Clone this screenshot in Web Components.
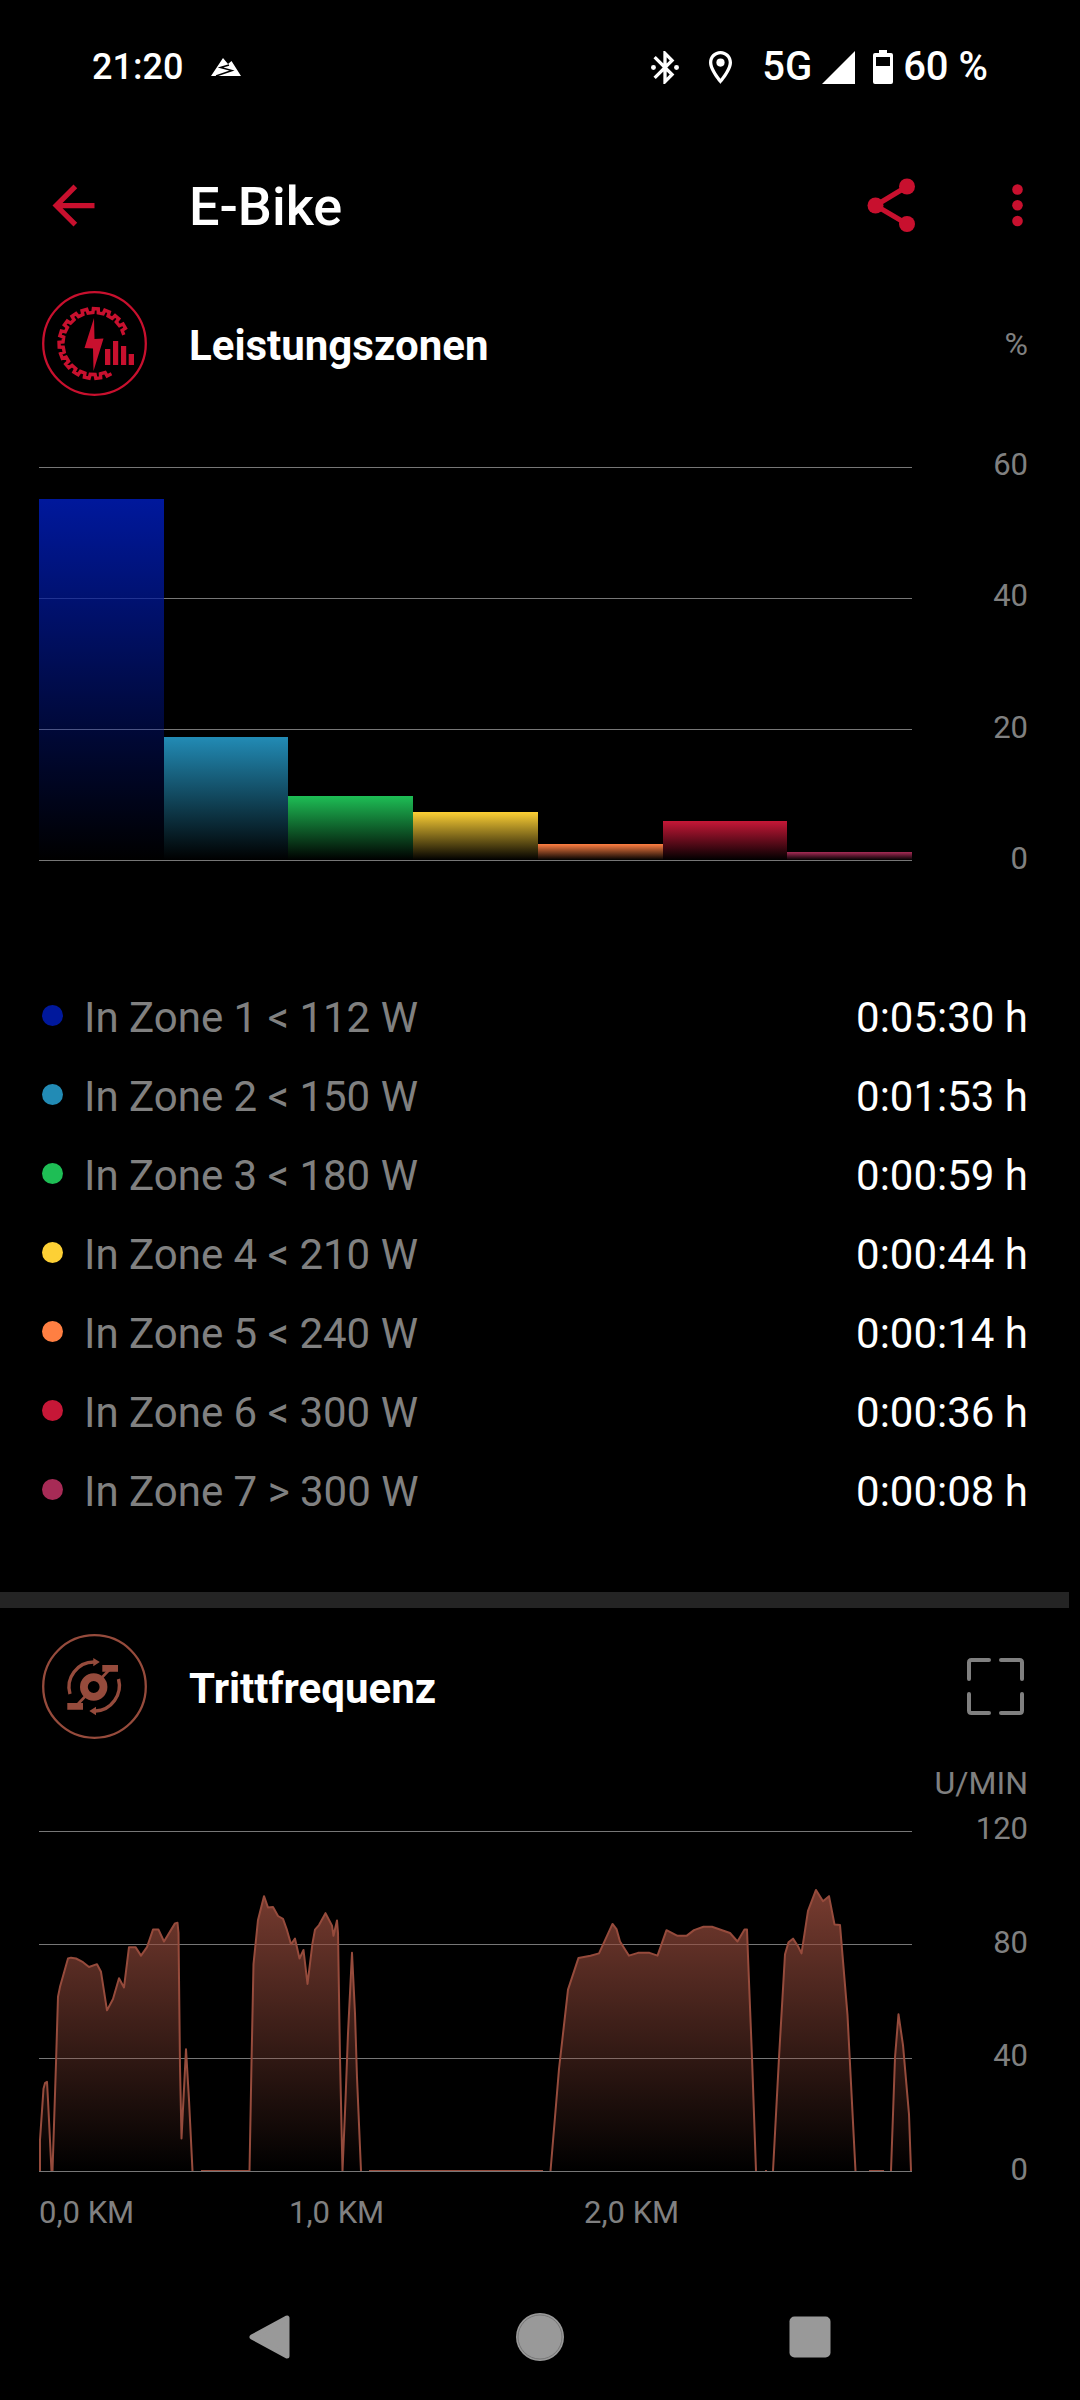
<!DOCTYPE html>
<html lang="de">
<head>
<meta charset="utf-8">
<meta name="viewport" content="width=device-width, initial-scale=1">
<title>E-Bike</title>
<style>
  body {
    margin: 0;
    background: #000;
    color: #fff;
    font-family: Roboto, "Liberation Sans", sans-serif;
  }
</style>
</head>
<body>
<ride-screen>
  <status-bar slot="status" time="21:20" network="5G" battery="60 %"></status-bar>
  <app-bar slot="header" label="E-Bike"></app-bar>

  <ride-section label="Leistungszonen" icon="power" color="#c8102e">
    <span slot="action">%</span>
    <bar-chart max="60" step="20"></bar-chart>
    <zone-table></zone-table>
  </ride-section>

  <section-divider></section-divider>

  <ride-section label="Trittfrequenz" icon="cadence" color="#964b3c">
    <icon-button slot="action" label="Vollbild" icon="fullscreen"></icon-button>
    <area-chart unit="U/MIN" max="120" step="40"></area-chart>
  </ride-section>

  <nav-bar slot="nav"></nav-bar>
</ride-screen>

<script>
const zones = [
  { name: 'In Zone 1 < 112 W', time: '0:05:30 h', percent: 55.1, color: '#00189c' },
  { name: 'In Zone 2 < 150 W', time: '0:01:53 h', percent: 18.8, color: '#228bb5' },
  { name: 'In Zone 3 < 180 W', time: '0:00:59 h', percent: 9.8, color: '#1ebe55' },
  { name: 'In Zone 4 < 210 W', time: '0:00:44 h', percent: 7.4, color: '#fdd035' },
  { name: 'In Zone 5 < 240 W', time: '0:00:14 h', percent: 2.4, color: '#ff7f42' },
  { name: 'In Zone 6 < 300 W', time: '0:00:36 h', percent: 6, color: '#c61737' },
  { name: 'In Zone 7 > 300 W', time: '0:00:08 h', percent: 1.3, color: '#a72b56' }
];

// [distance, rpm] samples, one list per stretch without a gap
const cadence = [
  [[1,0],[1,11],[4.5,29],[6,31],[8,31.5],[9,25],[12.5,0],[13.5,0],[17,38],[19,61.5],[21,65],[29,75],[32,75.3],[37,75],
   [44,73.7],[50,72],[58,73],[62,70.3],[68,56.7],[74,60.7],[80,68],[85,64.8],[90,79],[96.5,79],[102,76],[108,79],
   [114,85.2],[119.5,85.2],[125,81],[136,87.4],[138.5,87.6],[139.5,84],[141,37],[142.5,11.5],[147,43],[150,25],[153.5,0]],
  [[162,0],[210.5,0],[212.5,38],[214.5,73],[219,88.6],[225,97],[229,93],[234,93.2],[239,90],[244,89],[248,85],[252,80],
   [256,82],[260.5,75],[264.5,78],[268.5,66],[273.5,80.4],[276,85.2],[280,86.8],[286.5,91],[293,86.6],[294.5,83],
   [298,88.4],[299,84],[301,40],[303.5,0],[306.5,25],[309,48.6],[313,77],[316,55.6],[318,33],[322,0]],
  [[330,0],[504,0]],
  [[511.5,0],[520,36],[529,64],[539.5,75.2],[551.5,76],[560,76.8],[573.5,87.2],[577.5,85.4],[581,81],[590,76],[599,77],
   [610.5,77],[618.5,76],[627.5,85],[638.5,83],[647.5,83],[655,85],[664.5,86.2],[673,86.2],[691,84],[698.5,81],
   [705.5,85.2],[708,85.2],[709,75.8],[713,40],[717,0]],
  [[726,0],[728,0]],
  [[734,0],[740,40],[746,76.5],[749.5,80.7],[754,82],[759,79.3],[762.5,76.8],[769,91.8],[777,99.2],[784,95.2],[790,97],
   [795.5,87],[801,86.8],[808.5,55],[816.5,0]],
  [[830,0],[845,0]],
  [[852,0],[856,40],[859.5,55.3],[864,44.4],[870,20],[872,0]]
];

// toothed ring, open on the right side
function gearPath() {
  const points = [];
  const at = (r, deg) => {
    const a = deg * Math.PI / 180;
    points.push((52 + r * Math.cos(a)).toFixed(2) + ' ' + (52.5 + r * Math.sin(a)).toFixed(2));
  };
  for (let deg = -16; deg > -300; deg -= 19) {
    at(31, deg);
    at(31, deg - 9);
    at(35, deg - 10);
    at(35, deg - 18);
  }
  return 'M' + points.join('L');
}

const icons = {
  peaks: [30, 18, '0 0 30 18', `
    <path d="M0 18 12 0l5 6 3.500-3L30 18z" fill="currentColor"/>
    <path d="M18 7 9.500 9.500 21 12.500 5 18" fill="none" stroke="#000" stroke-width="1.500"/>`],
  bluetooth: [28, 33, '3.5 2 17 20', `
    <path fill="currentColor" d="M17.710 7.710 12 2h-1v7.590L6.410 5 5 6.410 10.590 12 5 17.590 6.410 19 11 14.410V22h1l5.710-5.710-4.300-4.290zM13 5.830l1.880 1.880L13 9.590zm1.880 10.460L13 18.170v-3.760z"/>
    <circle cx="5" cy="12" r="1.500" fill="currentColor"/><circle cx="19" cy="12" r="1.500" fill="currentColor"/>`],
  place: [23, 33, '5 2 14 20', `
    <path fill="currentColor" d="M12 2C8.130 2 5 5.130 5 9c0 5.250 7 13 7 13s7-7.750 7-13c0-3.870-3.130-7-7-7zM7 9c0-2.760 2.240-5 5-5s5 2.240 5 5c0 2.880-2.880 7.190-5 9.880C9.920 16.210 7 11.850 7 9z"/>
    <circle cx="12" cy="9" r="2.500" fill="currentColor"/>`],
  signal: [33, 33, '0 0 33 33', '<path d="M33 0v33H0z" fill="currentColor"/>'],
  battery: [20, 34, '0 0 20 34', `
    <path fill="currentColor" fill-rule="evenodd" d="M6 0h8v3h4q2 0 2 2v27q0 2-2 2H2q-2 0-2-2V5q0-2 2-2h4zM3 7v9h14V7z"/>`],
  back: [63, 63, '0 0 24 24', '<path fill="currentColor" d="M20 11H7.830l5.590-5.590L12 4l-8 8 8 8 1.410-1.410L7.830 13H20z"/>'],
  share: [63, 63, '0 0 63 63', `
    <path d="M47 12.500 15.500 31.500 47 50" fill="none" stroke="currentColor" stroke-width="5"/>
    <g fill="currentColor"><circle cx="47" cy="12.500" r="8"/><circle cx="15.500" cy="31.500" r="8"/><circle cx="47" cy="50" r="8"/></g>`],
  more: [63, 63, '0 0 63 63', `
    <g fill="currentColor"><circle cx="31.500" cy="15.500" r="5.300"/><circle cx="31.500" cy="31.300" r="5.300"/><circle cx="31.500" cy="47" r="5.300"/></g>`],
  fullscreen: [66, 66, '0 0 66 66', `
    <path d="M27 6H9.500Q7 6 7 8.500V25M39 6h18.500Q60 6 60 8.500V25M27 59H9.500Q7 59 7 56.500V40M39 59h18.500q2.500 0 2.500-2.500V40"
      fill="none" stroke="currentColor" stroke-width="4" stroke-linecap="round"/>`],
  power: [105, 105, '0 0 105 105', `
    <circle cx="52.500" cy="52.500" r="51.300" fill="none" stroke="currentColor" stroke-width="2.300"/>
    <path d="${gearPath()}" fill="none" stroke="currentColor" stroke-width="3.400"/>
    <path fill="currentColor" d="M52 27 42.500 57l8.500 .5L51.500 80l10-32.500-9 .5zM63 58h5.300v16H63zM71 50h5.200v24H71zM79 55h5.200v19H79zM86.700 63H92v11h-5.300z"/>`],
  cadence: [105, 105, '0 0 105 105', `
    <circle cx="52.500" cy="52.500" r="51.300" fill="none" stroke="currentColor" stroke-width="2.300"/>
    <g fill="none" stroke="currentColor">
      <circle cx="51.700" cy="53" r="9.800" stroke-width="7.800"/>
      <path d="M67 36 59 44.500M44 61.500 36 70" stroke-width="2.600"/>
      <path d="M28 60A25 25 0 0 1 52 28M76.500 45A25.500 25.500 0 0 1 53.500 77" stroke-width="3.400"/>
    </g>
    <path fill="currentColor" d="M60.300 31H76v6.700H60.300zM25.300 69H41v6.700H25.300zM51.300 24l6.500 4-6.500 4.200zM54 72.800 47.300 77l6.700 4.200z"/>`],
  navBack: [48, 48, '0 0 48 48', `
    <path d="M41 5v38L6 24z" fill="currentColor" stroke="currentColor" stroke-width="5" stroke-linejoin="round"/>`],
  navHome: [48, 48, '0 0 48 48', `
    <circle cx="24" cy="24" r="24" fill="currentColor"/>
    <circle cx="24" cy="24" r="22" fill="none" stroke="#777"/>`],
  navRecent: [48, 48, '0 0 48 48', '<rect x="3.500" y="3.500" width="41" height="41" rx="5" fill="currentColor"/>']
};

function icon(name) {
  const [width, height, viewBox, body] = icons[name];
  return `<svg width="${width}" height="${height}" viewBox="${viewBox}" aria-hidden="true">${body}</svg>`;
}

// scale values from top to bottom, shared by both charts
function ticks(max, step) {
  const values = [];
  for (let v = max; v >= 0; v -= step) values.push(v);
  return values;
}

const chartStyle = `
  :host {
    display: block;
    padding-left: 39px;
  }
  .chart {
    display: grid;
    grid-template-columns: 1fr 116px;
  }
  .plot {
    display: grid;
    height: var(--plot-height);
    padding: 20px 0 16px;
  }
  .lines, .data {
    grid-area: 1 / 1;
    min-height: 0;
  }
  .lines {
    display: flex;
    flex-direction: column;
    justify-content: space-between;
  }
  .lines i {
    height: 1px;
    background: #777;
  }
  .data {
    padding-bottom: 1px;
  }
  .scale {
    display: flex;
    flex-direction: column;
    justify-content: space-between;
    text-align: right;
  }
  .scale, .distance {
    color: #808080;
    font-size: 31px;
    line-height: 36px;
  }
`;

class RideScreen extends HTMLElement {
  constructor() {
    super();
    this.attachShadow({ mode: 'open' }).innerHTML = `
      <style>
        :host {
          display: flex;
          flex-direction: column;
          min-height: 100vh;
        }
        slot[name="nav"] {
          display: block;
          margin-top: auto;
        }
      </style>
      <slot name="status"></slot>
      <slot name="header"></slot>
      <main><slot></slot></main>
      <slot name="nav"></slot>
    `;
  }
}

class StatusBar extends HTMLElement {
  connectedCallback() {
    this.attachShadow({ mode: 'open' }).innerHTML = `
      <style>
        :host {
          display: flex;
          align-items: center;
          height: 134px;
          padding: 0 92px;
          font-size: 36px;
          font-weight: 500;
          line-height: 42px;
        }
        .peaks {
          display: flex;
          margin-left: 28px;
        }
        .system {
          display: flex;
          align-items: center;
          gap: 30px;
          margin-left: auto;
          font-size: 40px;
        }
        .group {
          display: flex;
          align-items: center;
          gap: 10px;
        }
        .group + .group {
          margin-left: -12px;
        }
      </style>
      <span>${this.getAttribute('time')}</span>
      <span class="peaks">${icon('peaks')}</span>
      <div class="system">
        ${icon('bluetooth')}
        ${icon('place')}
        <span class="group">${this.getAttribute('network')}${icon('signal')}</span>
        <span class="group">${icon('battery')}${this.getAttribute('battery')}</span>
      </div>
    `;
  }
}

class IconButton extends HTMLElement {
  connectedCallback() {
    this.attachShadow({ mode: 'open' }).innerHTML = `
      <style>
        :host {
          display: flex;
        }
        button {
          display: flex;
          flex: 1;
          align-items: center;
          justify-content: center;
          padding: 0;
          border: 0;
          background: none;
          color: inherit;
          cursor: pointer;
        }
      </style>
      <button type="button" aria-label="${this.getAttribute('label')}">${icon(this.getAttribute('icon'))}</button>
    `;
  }
}

class AppBar extends HTMLElement {
  connectedCallback() {
    this.attachShadow({ mode: 'open' }).innerHTML = `
      <style>
        :host {
          display: block;
        }
        header {
          display: flex;
          align-items: center;
          height: 142px;
          padding-left: 42px;
        }
        icon-button {
          color: #c8102e;
        }
        h1 {
          flex: 1;
          margin: 0 0 0 84px;
          padding-top: 4px;
          font-size: 54px;
          font-weight: 500;
          line-height: 62px;
        }
        .action {
          width: 126px;
          height: 126px;
        }
      </style>
      <header>
        <icon-button label="Zurück" icon="back"></icon-button>
        <h1>${this.getAttribute('label')}</h1>
        <icon-button class="action" label="Teilen" icon="share"></icon-button>
        <icon-button class="action" label="Mehr" icon="more"></icon-button>
      </header>
    `;
  }
}

class RideSection extends HTMLElement {
  connectedCallback() {
    this.attachShadow({ mode: 'open' }).innerHTML = `
      <style>
        :host {
          display: block;
          padding: 15px 52px 0 0;
        }
        .head {
          display: flex;
          align-items: center;
          gap: 42px;
          padding-left: 42px;
        }
        .badge {
          display: flex;
          color: ${this.getAttribute('color')};
        }
        h2 {
          flex: 1;
          margin: 0;
          padding-top: 4px;
          font-size: 42px;
          font-weight: 700;
          line-height: 49px;
        }
        .action {
          color: #808080;
          font-size: 32px;
          line-height: 36px;
        }
      </style>
      <section>
        <div class="head">
          <span class="badge">${icon(this.getAttribute('icon'))}</span>
          <h2>${this.getAttribute('label')}</h2>
          <div class="action"><slot name="action"></slot></div>
        </div>
        <slot></slot>
      </section>
    `;
  }
}

class SectionDivider extends HTMLElement {
  constructor() {
    super();
    this.attachShadow({ mode: 'open' }).innerHTML = `
      <style>
        :host {
          display: block;
          height: 16px;
          margin: 61px 11px 11px 0;
          background: #242424;
        }
      </style>
    `;
  }
}

class BarChart extends HTMLElement {
  connectedCallback() {
    const max = Number(this.getAttribute('max'));
    const values = ticks(max, Number(this.getAttribute('step')));

    this.attachShadow({ mode: 'open' }).innerHTML = `
      <style>
        ${chartStyle}
        :host {
          --plot-height: 394px;
          margin-top: 51px;
        }
        .data {
          display: flex;
          align-items: flex-end;
        }
        .data i {
          flex: 1;
          background: linear-gradient(var(--color), transparent);
        }
      </style>
      <div class="chart">
        <div class="plot">
          <div class="lines">${values.map(() => '<i></i>').join('')}</div>
          <div class="data">
            ${zones.map(z => `<i style="height:${z.percent / max * 100}%;--color:${z.color}"></i>`).join('')}
          </div>
        </div>
        <div class="scale">${values.map(v => `<span>${v}</span>`).join('')}</div>
      </div>
    `;
  }
}

class AreaChart extends HTMLElement {
  connectedCallback() {
    const max = Number(this.getAttribute('max'));
    const values = ticks(max, Number(this.getAttribute('step')));
    const lines = cadence.map(part => part.map(([x, y]) => `${x},${max - y}`).join(' '));

    this.attachShadow({ mode: 'open' }).innerHTML = `
      <style>
        ${chartStyle}
        :host {
          --plot-height: 341px;
        }
        .unit {
          margin: 26px 0 10px;
          color: #808080;
          font-size: 32px;
          line-height: 36px;
          text-align: right;
        }
        svg {
          display: block;
          width: 100%;
          height: 100%;
        }
        polyline {
          fill: none;
          stroke: #964b3c;
          stroke-width: 2;
          stroke-linejoin: round;
          vector-effect: non-scaling-stroke;
        }
        .distance {
          display: grid;
          grid-template-columns: 250fr 295fr 328fr;
          margin: 7px 116px 0 0;
        }
      </style>
      <div class="unit">${this.getAttribute('unit')}</div>
      <div class="chart">
        <div class="plot">
          <div class="lines">${values.map(() => '<i></i>').join('')}</div>
          <div class="data">
            <svg viewBox="0 0 873 ${max}" preserveAspectRatio="none" role="img" aria-label="Trittfrequenz">
              <defs>
                <linearGradient id="fade" gradientUnits="userSpaceOnUse" x1="0" y1="20" x2="0" y2="${max}">
                  <stop offset="0" stop-color="#964b3c" stop-opacity=".8"/>
                  <stop offset="1" stop-color="#964b3c" stop-opacity="0"/>
                </linearGradient>
              </defs>
              ${lines.map(p => `<polygon points="${p}" fill="url(#fade)"/><polyline points="${p}"/>`).join('')}
            </svg>
          </div>
        </div>
        <div class="scale">${values.map(v => `<span>${v}</span>`).join('')}</div>
      </div>
      <div class="distance"><span>0,0 KM</span><span>1,0 KM</span><span>2,0 KM</span></div>
    `;
  }
}

class ZoneTable extends HTMLElement {
  connectedCallback() {
    this.attachShadow({ mode: 'open' }).innerHTML = `
      <style>
        :host {
          display: block;
          margin-top: 101px;
          padding-left: 42px;
        }
        table {
          width: 100%;
          border-collapse: collapse;
          font-size: 42px;
          line-height: 49px;
        }
        th, td {
          padding: 15px 0;
        }
        th {
          display: flex;
          align-items: center;
          gap: 21px;
          color: #808080;
          font-weight: 400;
        }
        th i {
          width: 21px;
          height: 21px;
          margin-bottom: 4px;
          border-radius: 50%;
        }
        td {
          text-align: right;
        }
      </style>
      <table>
        ${zones.map(z => `
          <tr>
            <th scope="row"><i style="background:${z.color}"></i>${z.name.replace('<', '&lt;')}</th>
            <td>${z.time}</td>
          </tr>`).join('')}
      </table>
    `;
  }
}

class NavBar extends HTMLElement {
  constructor() {
    super();
    this.attachShadow({ mode: 'open' }).innerHTML = `
      <style>
        :host {
          display: block;
          color: #999;
        }
        nav {
          display: grid;
          grid-template-columns: repeat(3, 1fr);
          height: 126px;
          padding: 0 12.5%;
        }
      </style>
      <nav>
        <icon-button label="Zurück" icon="navBack"></icon-button>
        <icon-button label="Startbildschirm" icon="navHome"></icon-button>
        <icon-button label="Übersicht" icon="navRecent"></icon-button>
      </nav>
    `;
  }
}

window.customElements.define('icon-button', IconButton);
window.customElements.define('ride-screen', RideScreen);
window.customElements.define('status-bar', StatusBar);
window.customElements.define('app-bar', AppBar);
window.customElements.define('ride-section', RideSection);
window.customElements.define('section-divider', SectionDivider);
window.customElements.define('bar-chart', BarChart);
window.customElements.define('area-chart', AreaChart);
window.customElements.define('zone-table', ZoneTable);
window.customElements.define('nav-bar', NavBar);
</script>
</body>
</html>
